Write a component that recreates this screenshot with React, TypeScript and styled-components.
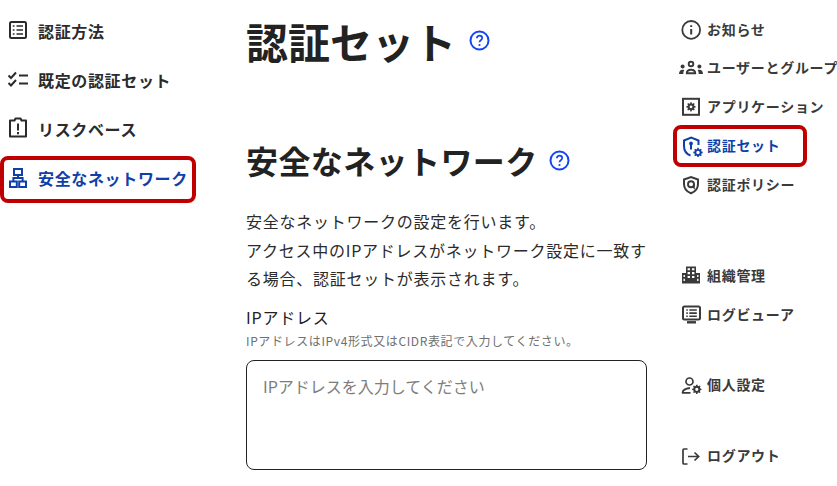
import React from "react";
import styled, { createGlobalStyle } from "styled-components";

const Global = createGlobalStyle`
  html, body { margin: 0; padding: 0; background: #fff; overflow: hidden; }
  body { font-family: "Noto Sans CJK JP", "Noto Sans", sans-serif; color: #222; }
`;

const Page = styled.div`
  width: 837px;
  height: 486px;
  overflow: hidden;
  display: grid;
  grid-template-columns: 246px 401px 190px;
`;

const LeftNav = styled.nav`
  display: flex;
  flex-direction: column;
  padding-top: 6.5px;
`;

const LeftItem = styled.div<{ $active?: boolean }>`
  box-sizing: border-box;
  width: 196px;
  height: 49px;
  display: flex;
  align-items: center;
  gap: 8px;
  padding-left: 6px;
  font-size: 16px;
  font-weight: 700;
  letter-spacing: 0.65px;
  white-space: nowrap;
  color: ${(p) => (p.$active ? "#0f3fa8" : "#2b2b2b")};
  position: relative;
  ${(p) =>
    p.$active &&
    `&::after { content: ""; position: absolute; left: 0; top: 2.5px; width: 196px; height: 47px; box-sizing: border-box; border: 4px solid #c00000; border-radius: 8px; }`}
`;

const Main = styled.main`
  display: flex;
  flex-direction: column;
`;

const Heading = styled.h1`
  margin: 12px 0 0;
  height: 58px;
  display: flex;
  align-items: center;
  gap: 13px;
  font-size: 42px;
  line-height: 58px;
  font-weight: 700;
  color: #222;
`;

const SubHeading = styled.h2`
  margin: 68px 0 0;
  height: 44px;
  display: flex;
  align-items: center;
  gap: 11px;
  font-size: 32px;
  line-height: 44px;
  font-weight: 700;
  letter-spacing: 0.4px;
  color: #222;
`;

const Body = styled.p`
  margin: 25px 0 0;
  font-size: 16px;
  line-height: 28.5px;
  letter-spacing: 0.75px;
  color: #2b2b2b;
`;

const Label = styled.div`
  margin-top: 12px;
  font-size: 16px;
  line-height: 24px;
  letter-spacing: 0.8px;
  color: #222;
`;

const Hint = styled.div`
  margin-top: 3px;
  font-size: 12px;
  line-height: 17px;
  letter-spacing: 0.62px;
  color: #6f6f6f;
  white-space: nowrap;
`;

const Input = styled.div`
  box-sizing: border-box;
  margin-top: 11px;
  width: 401px;
  height: 110px;
  border: 1px solid #222;
  border-radius: 8px;
  padding: 4px 16px;
  font-size: 16px;
  line-height: 42px;
  color: #7d7d7d;
`;

const RightNav = styled.nav`
  display: flex;
  flex-direction: column;
  padding: 9.2px 0 0 32px;
`;

const RightItem = styled.div<{ $active?: boolean; $mt?: number }>`
  height: 38.8px;
  margin-top: ${(p) => p.$mt ?? 0}px;
  display: flex;
  align-items: center;
  gap: 4px;
  font-size: 14px;
  font-weight: 700;
  letter-spacing: 0.7px;
  white-space: nowrap;
  color: ${(p) => (p.$active ? "#0f3fa8" : "#3a3a3a")};
  position: relative;
  ${(p) =>
    p.$active &&
    `&::after { content: ""; position: absolute; left: -6px; top: -0.6px; width: 134px; height: 42px; box-sizing: border-box; border: 4px solid #c00000; border-radius: 8px; }`}
`;

const Ico = styled.svg`
  flex: none;
  width: 24px;
  height: 24px;
  fill: none;
  stroke: currentColor;
  stroke-width: 2;
`;

const SolidIco = styled(Ico)`
  fill: currentColor;
  stroke: none;
`;

const Help = styled.svg<{ $lift?: number }>`
  flex: none;
  width: 21px;
  height: 21px;
  margin-bottom: ${(p) => p.$lift ?? 0}px;
  color: #1446f0;
`;

const HelpIcon = ({ lift }: { lift?: number }) => (
  <Help $lift={lift} viewBox="0 0 21 21" fill="none">
    <circle cx="10.5" cy="10.5" r="9" stroke="currentColor" strokeWidth="2" />
    <path d="M7.8 8.2c0-1.5 1.2-2.5 2.7-2.5s2.7 1 2.7 2.4c0 2.2-2.7 2.1-2.7 4.2" stroke="currentColor" strokeWidth="1.7" />
    <circle cx="10.5" cy="15" r="1.1" fill="currentColor" />
  </Help>
);

/* A cog outline with a round hole, drawn as one even-odd path. */
const Gear = ({ cx, cy, R, r, hole }: { cx: number; cy: number; R: number; r: number; hole: number }) => {
  const teeth = 8;
  const pts: string[] = [];
  for (let i = 0; i < teeth; i++) {
    const a = (i / teeth) * Math.PI * 2;
    const s = (Math.PI * 2) / teeth;
    [
      [r, a - s * 0.32],
      [R, a - s * 0.17],
      [R, a + s * 0.17],
      [r, a + s * 0.32],
    ].forEach(([rad, t]) => pts.push(`${(cx + rad * Math.cos(t)).toFixed(2)} ${(cy + rad * Math.sin(t)).toFixed(2)}`));
  }
  const d =
    `M${pts.join("L")}Z` +
    `M${cx - hole} ${cy}a${hole} ${hole} 0 1 0 ${hole * 2} 0a${hole} ${hole} 0 1 0 ${-hole * 2} 0Z`;
  return <path d={d} fill="currentColor" fillRule="evenodd" stroke="none" />;
};

const I = {
  list: (
    <Ico viewBox="0 0 24 24">
      <rect x="4" y="3" width="16" height="16" rx="1.5" />
      <path d="M6.8 7h1.7M6.800 11h1.700M6.800 15h1.700M10.500 7h6.500M10.500 11h6.500M10.500 15h6.500" strokeWidth="1.700" />
    </Ico>
  ),
  checks: (
    <Ico viewBox="0 0 24 24">
      <path d="M2.500 7.500l2.500 2.500L10 4.500M2.500 15l2.500 2.500L10 12M13 7.500h9M13 15.500h9" />
    </Ico>
  ),
  clip: (
    <Ico viewBox="0 0 24 24">
      <path d="M8.500 3.500H4v16h16v-16h-4.500l-1-2h-5z" strokeLinejoin="round" />
      <path d="M12 6.500v7M12 15v2.300" />
    </Ico>
  ),
  net: (
    <Ico viewBox="0 0 24 24">
      <rect x="8" y="3" width="8" height="6" />
      <rect x="4" y="15.500" width="6.800" height="5.500" />
      <rect x="13.200" y="15.500" width="6.800" height="5.500" />
      <path d="M12 9v3M7.400 15.500V12h9.200v3.500" />
    </Ico>
  ),
  info: (
    <Ico viewBox="0 0 24 24">
      <circle cx="12.200" cy="12.900" r="8.900" strokeWidth="1.800" />
      <path d="M12.200 12v5.500M12.200 8.200v1.800" />
    </Ico>
  ),
  users: (
    <SolidIco viewBox="0 0 24 24">
      <circle cx="12" cy="9" r="2.300" stroke="currentColor" strokeWidth="1.900" fill="none" />
      <path d="M7.800 18.300c0-2.500 1.800-3.600 4.200-3.600s4.200 1.100 4.200 3.600z" stroke="currentColor" strokeWidth="1.900" fill="none" />
      <circle cx="3.600" cy="11.500" r="2" />
      <circle cx="20.400" cy="11.500" r="2" />
      <path d="M0 19c0-2.700 1.500-4.200 3.600-4.200 .7 0 1.200 .1 1.700 .4-.7 .9-1 2.100-1 3.800zM24 19c0-2.700-1.500-4.200-3.600-4.200-.7 0-1.200 .1-1.700 .4 .7 .9 1 2.100 1 3.800z" />
    </SolidIco>
  ),
  app: (
    <Ico viewBox="0 0 24 24">
      <rect x="4" y="4.800" width="16" height="16" />
      <Gear cx={12} cy={12.800} R={4.700} r={3.500} hole={1.400} />
    </Ico>
  ),
  shieldGear: (
    <Ico viewBox="0 0 24 24">
      <path d="M11.500 22.500C7.300 21 5 17.500 5 13V7.500L12.200 4.500 19.500 7.500V12" />
      <circle cx="12" cy="10.500" r="1.900" fill="currentColor" stroke="none" />
      <path d="M12 11v5.500" />
      <Gear cx={19} cy={19.500} R={4.700} r={3.600} hole={1.700} />
    </Ico>
  ),
  shieldAt: (
    <Ico viewBox="0 0 24 24">
      <path d="M12 21.300C7.500 19.500 5 16.300 5 12V7.500L12 5l7 2.500V12c0 4.300-2.500 7.500-7 9.300z" />
      <circle cx="12" cy="12.300" r="3" strokeWidth="1.900" />
      <path d="M15 12.300v3.500l-1.500-1.500" strokeWidth="1.600" />
    </Ico>
  ),
  org: (
    <SolidIco viewBox="0 0 24 24">
      <path
        fillRule="evenodd"
        d="M7 3.400h10V10h4v10.400H3V10h4zM8.600 5.200v2.100h2.400V5.200zM13 5.200v2.100h2.400V5.200zM8.600 9v2.200h2.400V9zM13 9v2.200h2.400V9zM4.500 12v2.100h1.400V12zM18.100 12v2.100h1.400V12zM8.600 12.900v2.200h2.400v-2.200zM13 12.900v2.200h2.400v-2.200zM4.500 15.800v2.200h1.400v-2.200zM18.100 15.800v2.200h1.400v-2.200z"
      />
    </SolidIco>
  ),
  log: (
    <Ico viewBox="0 0 24 24">
      <rect x="4" y="4.600" width="17" height="13" rx="1.500" />
      <path d="M7.300 8h1.500M7.300 11.100h1.500M7.300 14.200h1.500M10.300 8h7.500M10.300 11.100h7.500M10.300 14.200h7.500" strokeWidth="1.600" />
      <path d="M8 20.300h9" strokeWidth="2.400" />
    </Ico>
  ),
  person: (
    <Ico viewBox="0 0 24 24">
      <circle cx="10.500" cy="9.500" r="3.500" strokeWidth="1.700" />
      <path d="M3.500 21c0-3 3-4.500 7.500-5M3 20.800h8.500" strokeWidth="1.800" />
      <Gear cx={17.800} cy={17.300} R={4.700} r={3.600} hole={1.600} />
    </Ico>
  ),
  logout: (
    <Ico viewBox="0 0 24 24">
      <path d="M8.500 6H5a1 1 0 0 0-1 1v13a1 1 0 0 0 1 1h3.500M9 13.500h10.500M15.500 9.500l4.200 4-4.200 4" strokeWidth="1.700" />
    </Ico>
  ),
};

export default function App() {
  return (
    <Page>
      <Global />
      <LeftNav>
        <LeftItem>{I.list}認証方法</LeftItem>
        <LeftItem>{I.checks}既定の認証セット</LeftItem>
        <LeftItem>{I.clip}リスクベース</LeftItem>
        <LeftItem $active>{I.net}安全なネットワーク</LeftItem>
      </LeftNav>
      <Main>
        <Heading>認証セット<HelpIcon lift={2} /></Heading>
        <SubHeading>安全なネットワーク<HelpIcon /></SubHeading>
        <Body>
          安全なネットワークの設定を行います。
          <br />
          アクセス中のIPアドレスがネットワーク設定に一致する場合、認証セットが表示されます。
        </Body>
        <Label>IPアドレス</Label>
        <Hint>IPアドレスはIPv4形式又はCIDR表記で入力してください。</Hint>
        <Input>IPアドレスを入力してください</Input>
      </Main>
      <RightNav>
        <RightItem>{I.info}お知らせ</RightItem>
        <RightItem>{I.users}ユーザーとグループ</RightItem>
        <RightItem>{I.app}アプリケーション</RightItem>
        <RightItem $active>{I.shieldGear}認証セット</RightItem>
        <RightItem>{I.shieldAt}認証ポリシー</RightItem>
        <RightItem $mt={52}>{I.org}組織管理</RightItem>
        <RightItem $mt={0.6}>{I.log}ログビューア</RightItem>
        <RightItem $mt={31.4}>{I.person}個人設定</RightItem>
        <RightItem $mt={31.6}>{I.logout}ログアウト</RightItem>
      </RightNav>
    </Page>
  );
}
